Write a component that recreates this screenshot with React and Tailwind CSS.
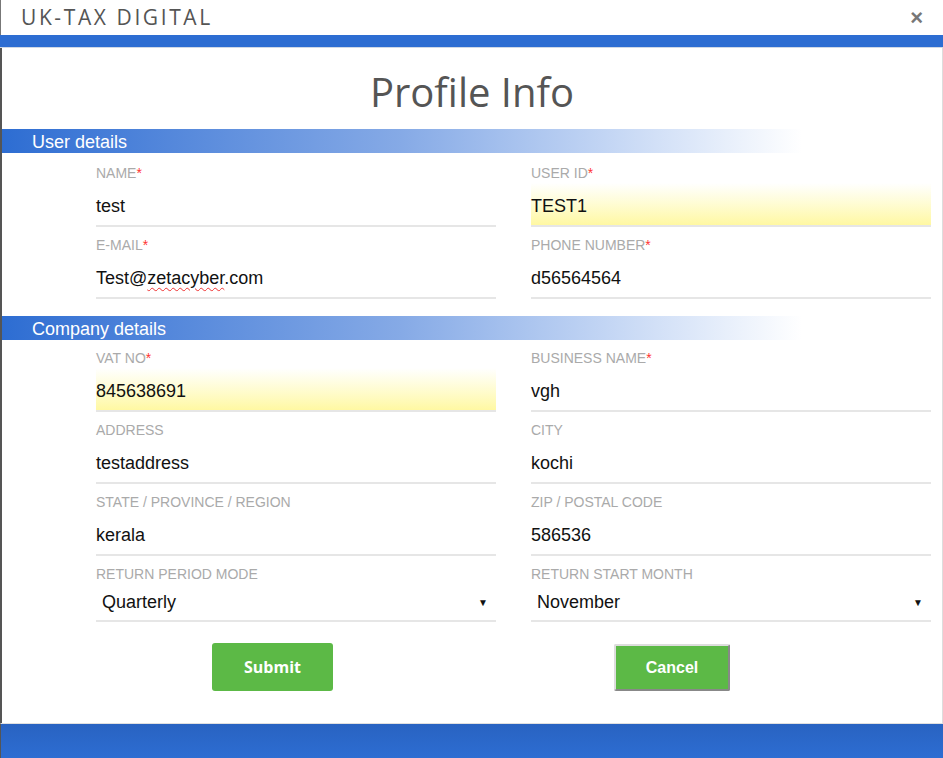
import React from 'react';

const arial = { fontFamily: '"Liberation Sans", Arial, sans-serif' };
const open = { fontFamily: '"Open Sans", "Noto Sans", sans-serif' };

function Field({ label, required, value, autofill, spell }) {
  return (
    <div className="flex flex-col h-[72px]">
      <div className="h-[20px] leading-[20px] text-[14px] text-[#aaaaaa] uppercase">
        {label}
        {required && <span className="text-[#f33]">*</span>}
      </div>
      <div
        className={
          'h-[44px] flex items-center pt-[4px] border-b-2 border-[#e6e6e6] text-[18px] text-[#111] ' +
          (autofill ? 'bg-gradient-to-b from-white to-[#fff8a2]' : '')
        }
      >
        {spell ? (
          <span>
            Test@<span className="underline decoration-wavy decoration-[#e33] decoration-1 underline-offset-[3px]">zetacyber</span>.com
          </span>
        ) : (
          <span>{value}</span>
        )}
      </div>
    </div>
  );
}

function SelectField({ label, value }) {
  return (
    <div className="flex flex-col h-[62px]">
      <div className="h-[20px] leading-[20px] text-[14px] text-[#aaaaaa] uppercase">{label}</div>
      <div className="h-[38px] flex items-center justify-between border-b-2 border-[#e6e6e6] text-[18px] text-[#111] pl-[6px] pr-[8px]">
        <span>{value}</span>
        <span className="text-[10px] text-[#111]">▼</span>
      </div>
    </div>
  );
}

function SectionHeader({ title }) {
  return (
    <div className="w-[800px] h-[24px] bg-gradient-to-r from-[#2d6dd2] via-[#86aae6] to-white pl-[30px] pt-[2px] leading-[22px] text-[18px] text-white">
      {title}
    </div>
  );
}

export default function App() {
  return (
    <div className="w-[943px] h-[758px] flex flex-col bg-white overflow-hidden" style={arial}>
      {/* title bar */}
      <div className="h-[35px] flex items-center justify-between pl-[20px] pr-[20px] border-l border-[#777] rounded-tr-[4px]">
        <span className="text-[21px] text-[#555] tracking-[2.6px]" style={open}>UK-TAX DIGITAL</span>
        <span className="text-[22px] font-bold text-[#777] leading-none" style={arial}>×</span>
      </div>
      <div className="h-[13px] bg-[#2d6dd2] border-b border-[#cfd8e6]"></div>

      {/* body */}
      <div className="flex-1 flex flex-col border-l-2 border-[#555] border-r border-r-[#dddddd]">
        <div className="h-[81px] flex items-center justify-center pt-[6px]">
          <h1 className="text-[40px] text-[#555]" style={open}>Profile Info</h1>
        </div>

        <SectionHeader title="User details" />
        <div className="grid grid-cols-[400px_400px] gap-x-[35px] pl-[94px] pt-[10px]">
          <Field label="Name" required value="test" />
          <Field label="User ID" required value="TEST1" autofill />
          <Field label="E-mail" required spell />
          <Field label="Phone Number" required value="d56564564" />
        </div>

        <div className="mt-[9px]">
          <SectionHeader title="Company details" />
        </div>
        <div className="grid grid-cols-[400px_400px] gap-x-[35px] pl-[94px] pt-[8px]">
          <Field label="VAT No" required value="845638691" autofill />
          <Field label="Business Name" required value="vgh" />
          <Field label="Address" value="testaddress" />
          <Field label="City" value="kochi" />
          <Field label="State / Province / Region" value="kerala" />
          <Field label="Zip / Postal Code" value="586536" />
          <SelectField label="Return Period Mode" value="Quarterly" />
          <SelectField label="Return Start Month" value="November" />
        </div>

        <div className="flex items-start pt-[17px]">
          <button
            className="ml-[210px] w-[121px] h-[48px] rounded-[3px] bg-[#5cb946] text-white text-[16px] font-bold"
            style={open}
          >
            Submit
          </button>
          <button
            className="ml-[281px] mt-[1px] w-[116px] h-[47px] bg-[#5cb946] text-white text-[16px] font-bold border-2 border-t-[#dddddd] border-l-[#dddddd] border-b-[#888888] border-r-[#888888] rounded-[2px]"
            style={arial}
          >
            Cancel
          </button>
        </div>
      </div>

      {/* footer */}
      <div className="h-[35px] border-t border-[#e0e0e0] border-l border-l-[#555] bg-gradient-to-b from-[#2963c1] to-[#2d6dd2]"></div>
    </div>
  );
}
